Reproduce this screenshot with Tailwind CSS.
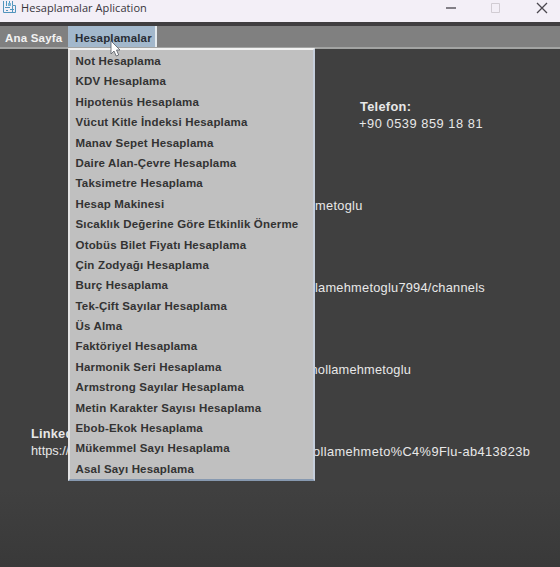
<!DOCTYPE html>
<html lang="tr">
<head>
<meta charset="utf-8">
<title>Hesaplamalar Aplication</title>
<script src="https://cdn.jsdelivr.net/npm/@tailwindcss/browser@4"></script>
</head>
<body class="relative flex h-[567px] w-[560px] flex-col overflow-hidden bg-[#404040] font-['Liberation_Sans',sans-serif]">
<header class="flex h-[22px] shrink-0 items-start justify-between bg-[#f3eff7] pl-[3px] pr-[12px]">
  <div class="flex items-start gap-[5px]">
    <svg class="mt-px h-[13px] w-[13px]" viewBox="0 0 13 13" fill="none" stroke="#5295bd" stroke-width="1">
      <path d="M.5 0v11.5h12V4.5H9.5V0M3.5 0v5M6.5 0v4M2 6.5h5M3 9.5h2M9.5 5v6M7 8.5h4"/><path d="M5 2h3v3H5z" fill="#79b5d5" stroke="none"/>
    </svg>
    <h1 class="text-[11px] leading-[16px] tracking-[0.06px] text-[#37343a] font-['Open_Sans',sans-serif]">Hesaplamalar Aplication</h1>
  </div>
  <svg class="h-[16px] w-[104px]" viewBox="0 0 104 16" fill="none">
    <path d="M2 8h10" stroke="#66636b" stroke-width="1.6"/>
    <path d="M47.5 3.500h8v9h-8z" stroke="#d1ccd3"/>
    <path d="M93 3l10 10M103 3L93 13" stroke="#4b474f" stroke-width="1.3"/>
  </svg>
</header>
<nav class="flex h-[27px] shrink-0 border-t-4 border-b-2 border-t-[#403e40] border-b-[#a3a4a3] bg-[#808080] text-[11.5px] font-bold leading-[24px]">
  <span class="w-[68px] pl-[5px] tracking-[0.2px] whitespace-nowrap text-[#f2f2f2]">Ana Sayfa</span>
  <span class="h-[21px] w-[89px] border-r-2 border-[#e4eaee] bg-[#a3b8cc] pl-[7px] tracking-[0.17px] whitespace-nowrap text-[#282d35]">Hesaplamalar</span>
</nav>
<main class="flex flex-1 justify-between bg-linear-to-b from-[#404040] from-85% to-[#393939] text-[12.8px] leading-[17px] text-[#e8e8e8]">
  <section class="w-[68px] pt-[376px] pl-[31px] whitespace-nowrap">
    <h2 class="font-bold tracking-[0.2px]">Linked</h2><p>https://</p>
  </section>
  <section class="flex w-[245px] flex-col pt-[49px] whitespace-nowrap">
    <div class="h-[99px] pl-[45px]"><h2 class="font-bold tracking-[0.3px]">Telefon:</h2><p class="-ml-px tracking-[0.55px]">+90 0539 859 18 81</p></div>
    <p class="h-[82px] tracking-[0.3px]">metoglu</p>
    <p class="h-[82px] tracking-[0.25px]">lamehmetoglu7994/channels</p>
    <p class="-ml-[8px] h-[82px] tracking-[0.2px]">mollamehmetoglu</p>
    <p class="-ml-[2px] tracking-[0.4px]">ollamehmeto%C4%9Flu-ab413823b</p>
  </section>
</main>
<ul class="absolute top-[48px] left-[68px] flex h-[433px] w-[247px] flex-col border-2 border-t-[#f2f2f2] border-r-[#c5cedb] border-b-[#8799b0] border-l-[#e3e3e3] bg-[#c0c0c0] pt-px pl-[5.500px] text-[11.5px] font-bold tracking-[0.18px] whitespace-nowrap text-[#333] *:h-[20.4px] *:leading-[20.4px]">
  <li>Not Hesaplama</li>
  <li>KDV Hesaplama</li>
  <li>Hipotenüs Hesaplama</li>
  <li>Vücut Kitle İndeksi Hesaplama</li>
  <li>Manav Sepet Hesaplama</li>
  <li>Daire Alan-Çevre Hesaplama</li>
  <li>Taksimetre Hesaplama</li>
  <li>Hesap Makinesi</li>
  <li>Sıcaklık Değerine Göre Etkinlik Önerme</li>
  <li>Otobüs Bilet Fiyatı Hesaplama</li>
  <li>Çin Zodyağı Hesaplama</li>
  <li>Burç Hesaplama</li>
  <li>Tek-Çift Sayılar Hesaplama</li>
  <li>Üs Alma</li>
  <li>Faktöriyel Hesaplama</li>
  <li>Harmonik Seri Hesaplama</li>
  <li>Armstrong Sayılar Hesaplama</li>
  <li>Metin Karakter Sayısı Hesaplama</li>
  <li>Ebob-Ekok Hesaplama</li>
  <li>Mükemmel Sayı Hesaplama</li>
  <li>Asal Sayı Hesaplama</li>
</ul>
<svg class="absolute top-[40px] left-[110px] h-[18px] w-[12px]" viewBox="0 0 12 18"><path d="M1 1v13l3-3 2.200 5 2.500-1-2.200-5H10z" fill="#fff" stroke="#555b64" stroke-width=".8"/></svg>
</body>
</html>
